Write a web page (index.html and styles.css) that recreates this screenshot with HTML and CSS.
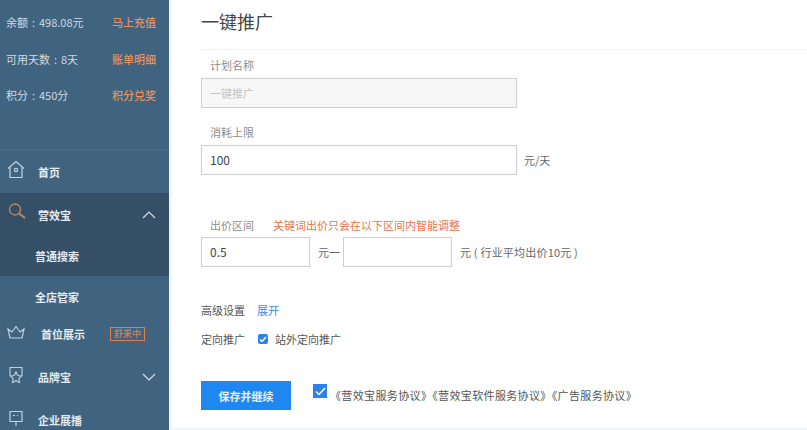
FILE: index.html
```html
<!DOCTYPE html>
<html lang="zh">
<head>
<meta charset="utf-8">
<title>一键推广</title>
<link rel="stylesheet" href="styles.css">
</head>
<body>
<div class="app">
  <aside class="sidebar">
    <div class="stats">
      <div class="stat"><span>余额 : 498.08元</span><a class="stat-link">马上充值</a></div>
      <div class="stat"><span>可用天数 : 8天</span><a class="stat-link">账单明细</a></div>
      <div class="stat"><span>积分 : 450分</span><a class="stat-link">积分兑奖</a></div>
    </div>
    <nav class="menu">
      <div class="item item-home">
        <svg class="icon" width="18" height="20" viewBox="0 0 18 20" fill="none" stroke="#c3d2de" stroke-width="1.2"><path d="M1 8.500 9 1.500l8 7M3 7.500V17.500h12V7.500"/><circle cx="9" cy="10" r="1.600"/></svg>
        <span>首页</span>
      </div>
      <div class="group">
        <div class="item item-search">
          <svg class="icon" width="20" height="20" viewBox="0 0 20 20" fill="none" stroke="#b98a68" stroke-width="1.3"><circle cx="8" cy="7.500" r="5.500"/><path d="m12 11.500 6 4.500" stroke-width="2"/></svg>
          <span>营效宝</span>
          <svg class="chev" width="14" height="8" viewBox="0 0 14 8" fill="none" stroke="#d5e0e9" stroke-width="1.2"><path d="m1 7 6-6 6 6"/></svg>
        </div>
        <div class="sub">普通搜索</div>
      </div>
      <div class="sub sub-plain">全店管家</div>
      <div class="item item-first">
        <svg class="icon" width="18" height="14" viewBox="0 0 18 14" fill="none" stroke="#c3d2de" stroke-width="1.2"><path d="M1 4l4 3 4-5.500L13 7l4-3-2 9H3z"/></svg>
        <span>首位展示</span>
        <span class="tag">舒采中</span>
      </div>
      <div class="item item-brand">
        <svg class="icon" width="16" height="20" viewBox="0 0 16 20" fill="none" stroke="#c3d2de" stroke-width="1.1"><path d="M2 10V1.500h12V10M8 6l1.800 3.600 3.700.5-2.700 2.600.7 3.800L8 14.700l-3.500 1.800.7-3.800L2.500 10.100l3.700-.5z"/></svg>
        <span>品牌宝</span>
        <svg class="chev" width="14" height="8" viewBox="0 0 14 8" fill="none" stroke="#d5e0e9" stroke-width="1.2"><path d="m1 1 6 6 6-6"/></svg>
      </div>
      <div class="item item-show">
        <svg class="icon" width="16" height="18" viewBox="0 0 16 18" fill="none" stroke="#c3d2de" stroke-width="1.2"><path d="M2 1.500h12v10H2zM8 11.500V16M5 5.500h2M9 5.500h1"/></svg>
        <span>企业展播</span>
      </div>
    </nav>
  </aside>
  <main class="main">
    <h1 class="title">一键推广</h1>
    <div class="form">
      <div class="label">计划名称</div>
      <div class="field field-wide field-off">一键推广</div>
      <div class="label label-limit">消耗上限</div>
      <div class="row">
        <div class="field field-wide">100</div>
        <span class="unit unit-day">元/天</span>
      </div>
      <div class="label label-bid">出价区间<span class="hint">关键词出价只会在以下区间内智能调整</span></div>
      <div class="row">
        <div class="field field-short">0.5</div>
        <span class="unit">元一</span>
        <div class="field field-short field-second"></div>
        <span class="unit unit-note">元 ( 行业平均出价10元 )</span>
      </div>
      <div class="line line-adv"><span class="line-key">高级设置</span><a class="link">展开</a></div>
      <div class="line line-target">
        <span class="line-key">定向推广</span>
        <span class="check check-small"><svg width="8" height="7" viewBox="0 0 8 7" fill="none" stroke="#fff" stroke-width="1.4"><path d="m1 3.500 2 2 4-4.500"/></svg></span>
        <span>站外定向推广</span>
      </div>
      <div class="actions">
        <button class="btn" type="button">保存并继续</button>
        <span class="check check-big"><svg width="11" height="9" viewBox="0 0 11 9" fill="none" stroke="#fff" stroke-width="1.5"><path d="m1 4.500 3 3 6-6.500"/></svg></span>
        <span class="terms">《营效宝服务协议》《营效宝软件服务协议》《广告服务协议》</span>
      </div>
    </div>
  </main>
</div>
</body>
</html>
```

FILE: styles.css
```css
* { box-sizing: border-box; }
html, body { margin: 0; height: 430px; overflow: hidden; }
body { font-family: "Noto Sans CJK SC", "Liberation Sans", sans-serif; font-size: 11px; color: #555; background: #f1f4f9; }
.app { display: flex; height: 430px; }

.sidebar { width: 169px; flex: none; background: #40637f; color: #d4dfe8; overflow: hidden; }
.stats { height: 150px; padding-top: 4px; border-bottom: 1px solid #4e6f8a; }
.stat { height: 36.500px; display: flex; align-items: center; justify-content: space-between; padding: 0 13px 0 6px; color: #cfdae3; word-spacing: 1.500px; }
.stat-link { color: #e8935a; font-weight: 500; }

.menu { font-weight: 700; color: #e3ebf1; }
.item { display: flex; align-items: center; position: relative; padding-left: 38px; height: 43px; }
.icon { position: absolute; left: 7px; top: 10px; }
.chev { position: absolute; left: 142px; top: 18px; }
.group { background: #354f67; height: 83px; }
.item-search .icon { top: 9px; }
.sub { padding-left: 35px; height: 40px; line-height: 40px; }
.sub-plain { height: 41px; line-height: 42px; }
.item-first { padding-left: 41px; height: 33px; }
.item-first .icon { top: 8px; }
.tag { margin-left: 25px; border: 1px solid #d9824f; color: #d9824f; font-size: 9px; line-height: 12px; padding: 0 3px; font-weight: 500; }
.item-brand { margin-top: 5px; }
.item-brand .icon { left: 8px; top: 11px; }
.item-show .icon { left: 8px; top: 12px; }

.main { flex: none; width: 635px; height: 428px; margin-left: 3px; background: #fff; }
.title { margin: 0 0 0 29px; height: 50px; padding-top: 7px; font-size: 18px; line-height: 28px; font-weight: 400; color: #444; border-bottom: 1px solid #eef0f2; }
.form { padding-left: 29px; }
.label { padding-left: 9px; color: #8e8e8e; line-height: 16px; }
.label:first-child { margin-top: 7px; margin-bottom: 5px; }
.label-limit { margin-top: 16px; margin-bottom: 5px; }
.label-bid { margin-top: 42px; margin-bottom: 4px; }
.hint { margin-left: 19px; color: #e8754a; }
.row { display: flex; align-items: center; }
.field { height: 30px; border: 1px solid #cfcfcf; background: #fff; line-height: 28px; padding-left: 8px; color: #444; font-size: 12px; flex: none; }
.field-wide { width: 316px; }
.field-off { background: #f7f7f7; color: #c4c4c4; font-size: 11px; }
.field-short { width: 109px; }
.field-second { margin-left: 3px; }
.unit { margin-left: 8px; color: #666; }
.unit-day { margin-left: 7px; }
.unit-note { letter-spacing: 0.2px; }
.line { display: flex; align-items: center; color: #555; line-height: 16px; }
.line-adv { margin-top: 35px; }
.line-target { margin-top: 13px; }
.line-key { width: 56px; flex: none; }
.link { color: #3f86e8; }
.check { display: inline-flex; align-items: center; justify-content: center; background: #2d82e8; flex: none; }
.check-small { width: 10px; height: 10px; border-radius: 2px; margin: 0 7px 0 1px; }
.actions { display: flex; align-items: center; margin-top: 34px; }
.btn { width: 90px; height: 29px; border: 0; padding: 0; background: #1e88f0; color: #e6f1fd; font: 700 11px "Noto Sans CJK SC", "Liberation Sans", sans-serif; }
.check-big { width: 14px; height: 14px; margin: -9px 0 0 22px; }
.terms { margin: -2px 0 0 3px; white-space: nowrap; color: #555; letter-spacing: 0.36px; }
```
